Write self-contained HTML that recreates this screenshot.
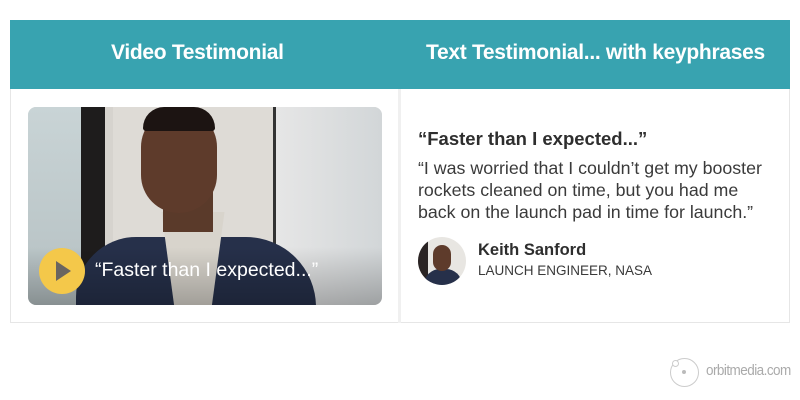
<!DOCTYPE html>
<html><head><meta charset="utf-8"><style>
body{margin:0;width:800px;height:400px;background:#fff;position:relative;overflow:hidden;font-family:"Liberation Sans",sans-serif}
.hdr{position:absolute;left:10px;top:20px;width:780px;height:69px;background:#38a3b0}
.hdr div{position:absolute;top:21px;color:#fff;font-weight:bold;font-size:21px;letter-spacing:-0.3px}
.card{position:absolute;left:10px;top:89px;width:778px;height:233px;border:1px solid #e6e6e6;border-top:none}
.div{position:absolute;left:398px;top:89px;width:3px;height:234px;background:#f0f0f0}
.vid{position:absolute;left:28px;top:107px;width:354px;height:198px;border-radius:8px;overflow:hidden;background:#dcdcd8}
.abs{position:absolute}
.t{position:absolute;color:#333}
</style></head><body>
<div class="hdr"><div style="left:101px">Video Testimonial</div><div style="left:416px">Text Testimonial... with keyphrases</div></div>
<div class="card"></div><div class="div"></div>
<div class="vid">
 <div class="abs" style="left:0;top:0;width:55px;height:198px;background:linear-gradient(#c9d4d6,#b5c0c2)"></div>
 <div class="abs" style="left:53px;top:0;width:24px;height:198px;background:#1e1c1c"></div>
 <div class="abs" style="left:77px;top:0;width:8px;height:198px;background:#d6d3ce"></div>
 <div class="abs" style="left:85px;top:0;width:160px;height:198px;background:#dedbd6"></div>
 <div class="abs" style="left:245px;top:0;width:3px;height:198px;background:#333"></div>
 <div class="abs" style="left:248px;top:0;width:106px;height:198px;background:linear-gradient(90deg,#e6e6e6,#d2d6d8)"></div>
 <div class="abs" style="left:48px;top:130px;width:240px;height:130px;border-radius:60px 70px 0 0;background:#26304a"></div>
 <div class="abs" style="left:120px;top:105px;width:90px;height:100px;background:#d8d4cc;clip-path:polygon(15% 0,85% 0,70% 100%,30% 100%)"></div>
 <div class="abs" style="left:135px;top:80px;width:50px;height:45px;background:#5a3a2a"></div>
 <div class="abs" style="left:113px;top:2px;width:76px;height:104px;border-radius:40px;background:#5e3b2b"></div>
 <div class="abs" style="left:115px;top:0px;width:72px;height:24px;border-radius:36px 36px 5px 5px;background:#1c1412"></div>
 <div class="abs" style="left:0;top:140px;width:354px;height:58px;background:linear-gradient(rgba(0,0,0,0),rgba(0,0,0,0.25))"></div>
 <div class="abs" style="left:11px;top:141px;width:46px;height:46px;border-radius:50%;background:#f4c84a"></div>
 <div class="abs" style="left:28px;top:154px;width:0;height:0;border-left:15px solid #6a6560;border-top:10px solid transparent;border-bottom:10px solid transparent"></div>
 <div class="abs" style="left:67px;top:152px;color:#fff;font-size:19.5px">“Faster than I expected...”</div>
</div>
<div class="t" style="left:418px;top:128px;font-size:18.5px;font-weight:bold;color:#2e2e2e">“Faster than I expected...”</div>
<div class="t" style="left:418px;top:157px;font-size:17.8px;line-height:22px;color:#3a3a3a">“I was worried that I couldn’t get my booster<br>rockets cleaned on time, but you had me<br>back on the launch pad in time for launch.”</div>
<div class="abs" style="left:418px;top:237px;width:48px;height:48px;border-radius:50%;overflow:hidden;background:#e8e6e2">
 <div class="abs" style="left:0;top:0;width:10px;height:48px;background:#2a2424"></div>
 <div class="abs" style="left:6px;top:32px;width:38px;height:24px;border-radius:16px 16px 0 0;background:#26304a"></div>
 <div class="abs" style="left:15px;top:8px;width:18px;height:26px;border-radius:9px;background:#5e3b2b"></div>
</div>
<div class="t" style="left:478px;top:241px;font-size:16.5px;font-weight:bold;color:#2e2e2e">Keith Sanford</div>
<div class="t" style="left:478px;top:263px;font-size:13.5px;color:#3a3a3a">LAUNCH ENGINEER, NASA</div>
<div class="abs" style="left:670px;top:358px;width:27px;height:27px;border:1.5px solid #ccc;border-radius:50%"></div>
<div class="abs" style="left:682px;top:370px;width:4px;height:4px;border-radius:50%;background:#bbb"></div>
<div class="abs" style="left:672px;top:360px;width:5px;height:5px;border-radius:50%;background:#fff;border:1.5px solid #ccc"></div>
<div class="abs" style="left:706px;top:362px;font-size:15px;color:#aaa;letter-spacing:-0.6px;transform:scaleX(0.9);transform-origin:left">orbitmedia.com</div>
</body></html>
